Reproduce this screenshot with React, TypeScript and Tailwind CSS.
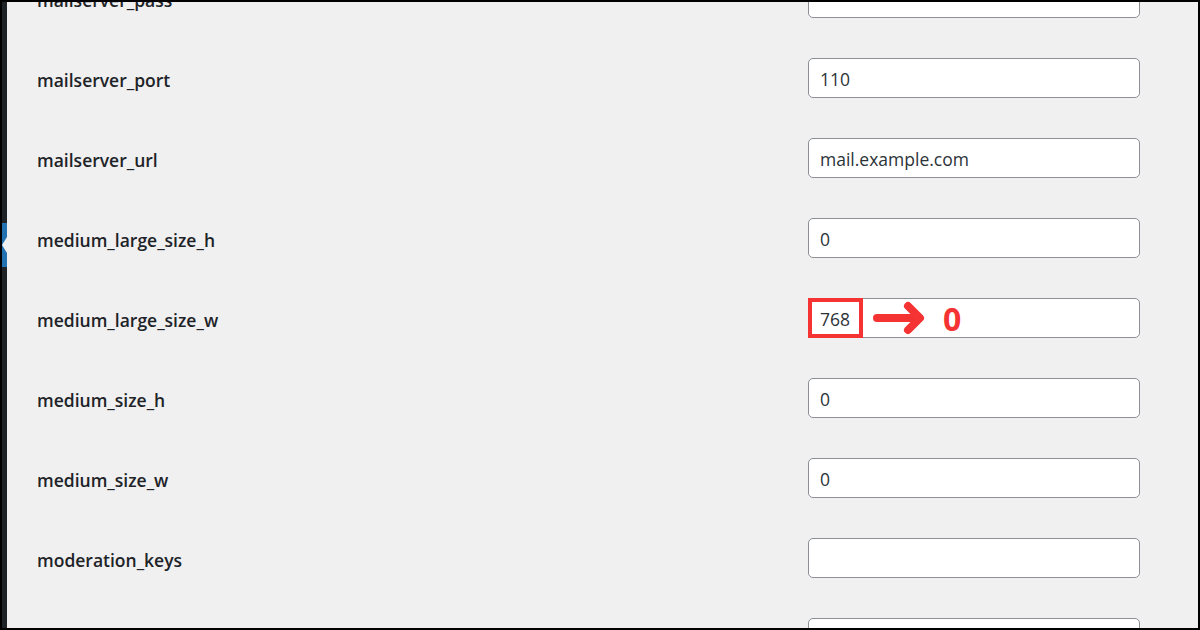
const rows: { name: string; value: string; note?: boolean }[] = [
  { name: 'mailserver_pass', value: '' },
  { name: 'mailserver_port', value: '110' },
  { name: 'mailserver_url', value: 'mail.example.com' },
  { name: 'medium_large_size_h', value: '0' },
  { name: 'medium_large_size_w', value: '768', note: true },
  { name: 'medium_size_h', value: '0' },
  { name: 'medium_size_w', value: '0' },
  { name: 'moderation_keys', value: '' },
  { name: '', value: '' },
];

function Arrow() {
  return (
    <svg width="56" height="36" viewBox="0 0 56 36" className="shrink-0">
      <line x1="5" y1="18" x2="46" y2="18" stroke="#f53333" strokeWidth="8" strokeLinecap="round" />
      <polyline
        points="36,6 48,18 36,30"
        fill="none"
        stroke="#f53333"
        strokeWidth="8"
        strokeLinecap="round"
        strokeLinejoin="round"
      />
    </svg>
  );
}

function OptionRow({ name, value, note }: { name: string; value: string; note?: boolean }) {
  return (
    <div className="flex h-[80px] shrink-0 items-center">
      <div className="flex-1 pl-[30px] pt-[4px] text-[17.5px] font-semibold text-[#1d2327]">{name}</div>
      <div className="relative mr-[58px] h-[40px] w-[332px] rounded-[5px] border border-[#8c8f94] bg-white">
        <div className="flex h-full items-center pl-[11px] pt-[2px] text-[17.5px] text-[#2c3338]">{value}</div>
        {note && (
          <div className="absolute inset-0 flex items-center">
            <div className="h-[40px] w-[55px] -ml-px border-4 border-[#f53333]" />
            <div className="ml-[9px]">
              <Arrow />
            </div>
            <div className="ml-[15px] pt-[2px] text-[32px] font-bold leading-none text-[#f53333]">0</div>
          </div>
        )}
      </div>
    </div>
  );
}

export default function App() {
  return (
    <div
      className="flex h-[630px] w-[1200px] overflow-hidden border-2 border-black bg-[#f0f0f1]"
      style={{ fontFamily: '"Open Sans", "Noto Sans", sans-serif' }}
    >
      <div className="flex w-[5px] shrink-0 flex-col bg-[#1d2327]">
        <div className="h-[221px]" />
        <div className="relative h-[44px] bg-[#2271b1]">
          <div className="absolute right-0 top-[14px] h-0 w-0 border-y-[8px] border-r-[5px] border-y-transparent border-r-[#f0f0f1]" />
        </div>
      </div>
      <div className="flex flex-1 flex-col">
        <div className="-mt-[44px] flex flex-col">
          {rows.map((r, i) => (
            <OptionRow key={i} {...r} />
          ))}
        </div>
      </div>
    </div>
  );
}
